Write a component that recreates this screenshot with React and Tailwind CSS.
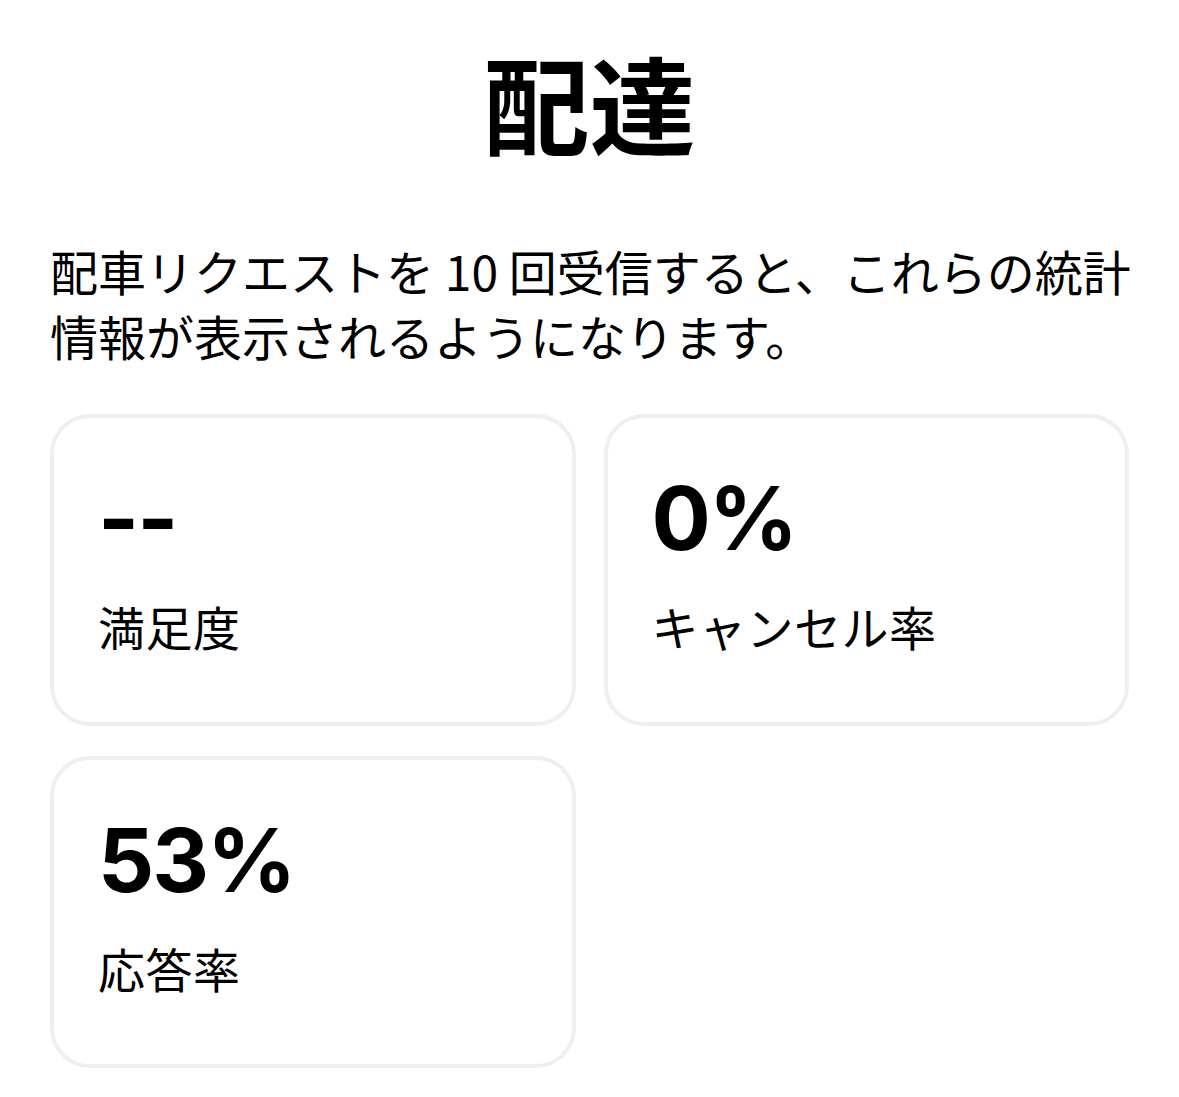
const stats = [
  { value: "--", label: "満足度" },
  { value: "0%", label: "キャンセル率" },
  { value: "53%", label: "応答率" },
];

function StatCard({ value, label }) {
  return (
    <div className="h-[312px] rounded-[40px] border-4 border-[#efefef] bg-white pl-[44px] pt-[56px]">
      <div className="font-['Inter',sans-serif] text-[88px] font-bold leading-none tracking-[-2px] text-black">
        {value}
      </div>
      <div className="mt-[40px] text-[47px] leading-none tracking-[0.5px] text-black">{label}</div>
    </div>
  );
}

export default function App() {
  return (
    <div className="min-h-screen w-[1179px] bg-white font-['Noto_Sans_CJK_JP','Noto_Sans',sans-serif] text-black">
      {/* Title */}
      <h1 className="pt-[48px] text-center text-[106px] font-bold leading-none">配達</h1>

      {/* Description */}
      <p className="mt-[84px] pl-[50px] pr-[20px] text-[48px] leading-[65px]">
        配車リクエストを 10 回受信すると、これらの統計情報が表示されるようになります。
      </p>

      {/* Stats */}
      <div className="mt-[46px] grid grid-cols-2 gap-x-[28px] gap-y-[30px] px-[50px]">
        {stats.map((s) => (
          <StatCard key={s.label} value={s.value} label={s.label} />
        ))}
      </div>
    </div>
  );
}
